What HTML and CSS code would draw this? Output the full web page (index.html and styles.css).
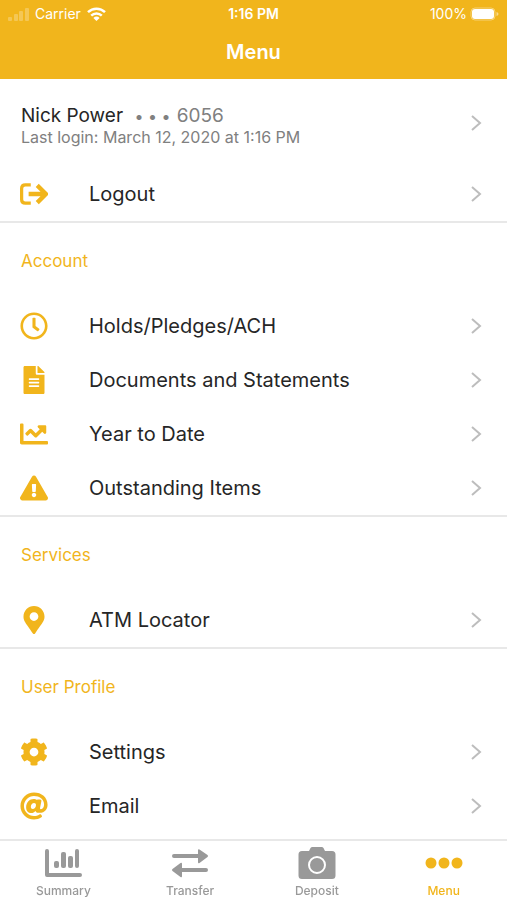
FILE: index.html
```html
<!DOCTYPE html>
<html lang="en">
<head>
  <meta charset="UTF-8">
  <meta name="viewport" content="width=device-width, initial-scale=1.0">
  <link rel="stylesheet" href="styles.css">
  <title>Menu</title>
</head>
<body>
  <svg class="defs" aria-hidden="true">
    <symbol id="chevron" viewBox="0 0 12 18">
      <path d="M2 2l8 7-8 7" fill="none" stroke="#bdbdbd" stroke-width="2"/>
    </symbol>
  </svg>

  <header class="header">
    <div class="status">
      <div class="carrier">
        <svg width="21" height="14" viewBox="0 0 21 14" fill="#fff" opacity=".25">
          <rect x="0" y="10" width="4" height="4" rx="1"/>
          <rect x="6" y="7" width="4" height="7" rx="1"/>
          <rect x="11" y="4" width="4" height="10" rx="1"/>
          <rect x="17" y="1" width="4" height="13" rx="1"/>
        </svg>
        <span>Carrier</span>
        <svg width="19" height="14" viewBox="0 0 19 14" fill="none" stroke="#fff" stroke-width="2.500">
          <path d="M1 5.200a12.200 12.200 0 0 1 17 0"/>
          <path d="M4.200 8.700a7.600 7.600 0 0 1 10.600 0"/>
          <path d="M9.500 14L6.400 10.900a4.400 4.400 0 0 1 6.200 0z" fill="#fff" stroke="none"/>
        </svg>
      </div>
      <div class="time">1:16 PM</div>
      <div class="battery">
        <span>100%</span>
        <svg width="29" height="14" viewBox="0 0 29 14">
          <rect x="1" y="1" width="24" height="12" rx="4" fill="none" stroke="#fff" opacity=".4"/>
          <rect x="2" y="2" width="22" height="10" rx="3" fill="#fff"/>
          <path d="M26.500 5v4q2-.5 2-2t-2-2z" fill="#fff" opacity=".5"/>
        </svg>
      </div>
    </div>
    <h1>Menu</h1>
  </header>

  <main class="content">
    <section>
      <a class="profile" href="#profile">
        <div class="profile-text">
          <div class="name">Nick Power <span class="dots">• • •</span> <span class="member">6056</span></div>
          <div class="login">Last login: March 12, 2020 at 1:16 PM</div>
        </div>
        <svg class="chevron"><use href="#chevron"/></svg>
      </a>
      <a class="row" href="#logout">
        <svg class="icon" viewBox="0 0 26 26" fill="none" stroke="currentColor" stroke-width="3">
          <path d="M10 4.500H5Q1.500 4.500 1.500 8v10q0 3.500 3.500 3.500h5"/>
          <path d="M8 13h15M16 5L24 13l-8 8" stroke-width="4"/>
        </svg>
        <span class="label">Logout</span>
        <svg class="chevron"><use href="#chevron"/></svg>
      </a>
    </section>

    <section>
      <h2>Account</h2>
      <a class="row" href="#holds">
        <svg class="icon" viewBox="0 0 512 512" fill="currentColor"><path d="M256 8C119 8 8 119 8 256s111 248 248 248 248-111 248-248S393 8 256 8zm0 448c-110.500 0-200-89.500-200-200S145.500 56 256 56s200 89.500 200 200-89.500 200-200 200zm61.800-104.400l-84.900-61.700c-3.100-2.300-4.900-5.900-4.900-9.700V116c0-6.600 5.400-12 12-12h32c6.600 0 12 5.400 12 12v141.700l66.800 48.600c5.400 3.900 6.500 11.400 2.600 16.800L334.600 349c-3.900 5.300-11.400 6.500-16.800 2.600z"/></svg>
        <span class="label">Holds/Pledges/ACH</span>
        <svg class="chevron"><use href="#chevron"/></svg>
      </a>
      <a class="row" href="#documents">
        <svg class="icon" viewBox="0 0 384 512" fill="currentColor"><path d="M224 136V0H24C10.700 0 0 10.700 0 24v464c0 13.300 10.700 24 24 24h336c13.300 0 24-10.700 24-24V160H248c-13.200 0-24-10.800-24-24zm64 236c0 6.600-5.400 12-12 12H108c-6.600 0-12-5.400-12-12v-8c0-6.600 5.400-12 12-12h168c6.600 0 12 5.400 12 12v8zm0-64c0 6.600-5.400 12-12 12H108c-6.600 0-12-5.400-12-12v-8c0-6.600 5.400-12 12-12h168c6.600 0 12 5.400 12 12v8zm0-72v8c0 6.600-5.400 12-12 12H108c-6.600 0-12-5.400-12-12v-8c0-6.600 5.400-12 12-12h168c6.600 0 12 5.400 12 12zm96-114.100v6.100H256V0h6.100c6.400 0 12.500 2.500 17 7l97.900 98c4.500 4.500 7 10.600 7 16.900z"/></svg>
        <span class="label">Documents and Statements</span>
        <svg class="chevron"><use href="#chevron"/></svg>
      </a>
      <a class="row" href="#year">
        <svg class="icon" viewBox="0 0 512 512" fill="currentColor"><path d="M496 384H64V80c0-8.840-7.160-16-16-16H16C7.160 64 0 71.160 0 80v336c0 17.670 14.330 32 32 32h464c8.840 0 16-7.160 16-16v-32c0-8.840-7.160-16-16-16zM464 96H345.940c-21.380 0-32.090 25.850-16.970 40.970l32.400 32.400L288 242.750l-73.370-73.370c-12.500-12.500-32.760-12.500-45.250 0l-68.690 68.690c-6.250 6.250-6.250 16.380 0 22.630l22.620 22.620c6.250 6.250 16.380 6.250 22.630 0L192 237.250l73.370 73.370c12.500 12.500 32.760 12.500 45.250 0l96-96 32.400 32.400c15.120 15.120 40.970 4.410 40.970-16.970V112c.010-8.840-7.150-16-15.990-16z"/></svg>
        <span class="label">Year to Date</span>
        <svg class="chevron"><use href="#chevron"/></svg>
      </a>
      <a class="row" href="#outstanding">
        <svg class="icon" viewBox="0 0 576 512" fill="currentColor"><path d="M569.517 440.013C587.975 472.007 564.806 512 527.940 512H48.054c-36.937 0-59.999-40.055-41.577-71.987L246.423 23.985c18.467-32.009 64.720-31.951 83.154 0l239.940 416.028zM288 354c-25.405 0-46 20.595-46 46s20.595 46 46 46 46-20.595 46-46-20.595-46-46-46zm-43.673-165.346l7.418 136c.347 6.364 5.609 11.346 11.982 11.346h48.546c6.373 0 11.635-4.982 11.982-11.346l7.418-136c.375-6.874-5.098-12.654-11.982-12.654h-63.383c-6.884 0-12.356 5.780-11.981 12.654z"/></svg>
        <span class="label">Outstanding Items</span>
        <svg class="chevron"><use href="#chevron"/></svg>
      </a>
    </section>

    <section>
      <h2>Services</h2>
      <a class="row" href="#atm">
        <svg class="icon" viewBox="0 0 384 512" fill="currentColor"><path d="M172.268 501.670C26.970 291.031 0 269.413 0 192 0 85.961 85.961 0 192 0s192 85.961 192 192c0 77.413-26.970 99.031-172.268 309.670-9.535 13.774-29.930 13.773-39.464 0zM192 272c44.183 0 80-35.817 80-80s-35.817-80-80-80-80 35.817-80 80 35.817 80 80 80z"/></svg>
        <span class="label">ATM Locator</span>
        <svg class="chevron"><use href="#chevron"/></svg>
      </a>
    </section>

    <section>
      <h2>User Profile</h2>
      <a class="row" href="#settings">
        <svg class="icon" viewBox="0 0 512 512" fill="currentColor"><path d="M487.400 315.700l-42.600-24.600c4.300-23.200 4.300-47 0-70.200l42.600-24.600c4.900-2.800 7.100-8.600 5.500-14-11.100-35.600-30-67.800-54.700-94.600-3.800-4.100-10-5.100-14.800-2.300L380.800 110c-17.900-15.400-38.500-27.300-60.800-35.100V25.800c0-5.600-3.900-10.500-9.400-11.700-36.700-8.200-74.300-7.800-109.200 0-5.500 1.200-9.400 6.100-9.400 11.700V75c-22.200 7.900-42.800 19.800-60.800 35.100L88.700 85.500c-4.900-2.800-11-1.900-14.800 2.300-24.700 26.700-43.600 58.900-54.700 94.600-1.700 5.400.6 11.200 5.500 14L67.300 221c-4.300 23.200-4.300 47 0 70.200l-42.600 24.600c-4.900 2.800-7.100 8.600-5.500 14 11.100 35.600 30 67.800 54.700 94.600 3.800 4.100 10 5.100 14.800 2.300l42.600-24.600c17.900 15.400 38.500 27.300 60.800 35.100v49.200c0 5.600 3.900 10.500 9.400 11.700 36.700 8.200 74.300 7.800 109.200 0 5.500-1.200 9.400-6.100 9.400-11.700v-49.200c22.200-7.900 42.800-19.800 60.800-35.100l42.600 24.600c4.900 2.800 11 1.900 14.800-2.300 24.700-26.700 43.600-58.900 54.700-94.600 1.500-5.500-.7-11.300-5.600-14.100zM256 336c-44.100 0-80-35.900-80-80s35.900-80 80-80 80 35.900 80 80-35.900 80-80 80z"/></svg>
        <span class="label">Settings</span>
        <svg class="chevron"><use href="#chevron"/></svg>
      </a>
      <a class="row" href="#email">
        <svg class="icon" viewBox="0 0 512 512" fill="currentColor"><path d="M256 8C118.941 8 8 118.919 8 256c0 137.059 110.919 248 248 248 48.154 0 95.342-14.140 135.408-40.223 12.005-7.815 14.625-24.288 5.552-35.372l-10.177-12.433c-7.671-9.371-21.179-11.667-31.373-5.129C325.920 429.757 291.314 440 256 440c-101.458 0-184-82.542-184-184S154.542 72 256 72c100.139 0 184 57.619 184 160 0 38.786-21.093 79.742-58.170 83.693-17.349-.454-16.910-12.857-13.476-30.024l23.433-121.110C394.653 149.750 383.308 136 368.225 136h-44.981a13.518 13.518 0 0 0-13.432 11.993l-.010.092c-14.697-17.901-40.448-21.775-59.971-21.775-74.580 0-137.831 62.234-137.831 151.460 0 65.303 36.785 105.870 96 105.870 26.984 0 57.369-15.637 74.991-38.333 9.522 34.104 40.613 34.103 70.710 34.103C462.609 379.410 504 307.798 504 232 504 95.653 394.023 8 256 8zm-21.680 304.430c-22.249 0-36.070-15.623-36.070-40.771 0-44.993 30.779-72.729 58.630-72.729 22.292 0 35.601 15.241 35.601 40.770 0 45.061-33.875 72.730-58.161 72.730z"/></svg>
        <span class="label">Email</span>
        <svg class="chevron"><use href="#chevron"/></svg>
      </a>
    </section>
  </main>

  <nav class="tabs">
    <a href="#summary">
      <svg width="38" height="32" viewBox="0 0 38 32" fill="currentColor">
        <path d="M3 4v24h33" fill="none" stroke="currentColor" stroke-width="4" stroke-linecap="round" stroke-linejoin="round"/>
        <rect x="10" y="14" width="5" height="7" rx="2"/>
        <rect x="17" y="5" width="5" height="16" rx="2"/>
        <rect x="24" y="9" width="5" height="12" rx="2"/>
        <rect x="31" y="2" width="4" height="19" rx="2"/>
      </svg>
      <span>Summary</span>
    </a>
    <a href="#transfer">
      <svg width="38" height="32" viewBox="0 0 38 32" fill="currentColor">
        <path d="M3 9h26M10 23h25" stroke="currentColor" stroke-width="4" stroke-linecap="round"/>
        <path d="M28.500 2.500L36.500 8q1.200 1 0 2l-8 6q-1.500 1-1.500-1V3.500q0-2 1.500-1zM9.500 16L1.500 22q-1.200 1 0 2l8 6q1.500 1 1.500-1V17q0-2-1.500-1z"/>
      </svg>
      <span>Transfer</span>
    </a>
    <a href="#deposit">
      <svg width="38" height="32" viewBox="0 0 38 32" fill="currentColor">
        <path d="M4 4h7l1.500-3Q13 0 14.500 0h9q1.500 0 2 1L27 4h7q3.500 0 3.500 3.500v21q0 3.500-3.500 3.500H4Q.5 32 .5 28.500v-21Q.5 4 4 4z"/>
        <circle cx="19" cy="18" r="8" fill="none" stroke="#fff" stroke-width="2"/>
      </svg>
      <span>Deposit</span>
    </a>
    <a class="active" href="#menu">
      <svg width="38" height="32" viewBox="0 0 38 32" fill="currentColor">
        <circle cx="6" cy="16" r="5.500"/>
        <circle cx="19" cy="16" r="5.500"/>
        <circle cx="32" cy="16" r="5.500"/>
      </svg>
      <span>Menu</span>
    </a>
  </nav>
</body>
</html>
```
FILE: styles.css
```css
* {
  box-sizing: border-box;
}
body {
  margin: 0;
  min-height: 100vh;
  display: flex;
  flex-direction: column;
  font-family: Inter, "Liberation Sans", sans-serif;
  color: #262626;
  background-color: #fff;
}
a {
  color: inherit;
  text-decoration: none;
}
svg {
  display: block;
  flex-shrink: 0;
}
.defs {
  width: 0;
  height: 0;
  position: absolute;
}

.header {
  height: 79px;
  color: #fff;
  background-color: #f1b51c;
}
.status {
  display: grid;
  grid-template-columns: 1fr auto 1fr;
  align-items: center;
  height: 27px;
  padding: 0 8px;
  font-size: 14px;
}
.carrier,
.battery {
  display: flex;
  align-items: center;
  gap: 6px;
}
.battery {
  justify-content: flex-end;
  gap: 3px;
}
.time {
  font-size: 14px;
  font-weight: 600;
}
.header h1 {
  margin: 0;
  font-size: 20px;
  font-weight: 600;
  line-height: 50px;
  text-align: center;
}

.content {
  flex: 1;
}
section {
  border-bottom: 2px solid #e8e8e8;
}
section:last-child {
  border-bottom: none;
}
.profile {
  display: flex;
  align-items: center;
  height: 88px;
  padding: 0 25px 0 21px;
}
.profile-text {
  flex: 1;
  padding-top: 4px;
}
.name {
  font-size: 19px;
  line-height: 23px;
}
.dots {
  margin: 0 1px 0 6px;
  font-size: 16px;
  color: #808080;
}
.member {
  color: #808080;
}
.login {
  font-size: 16px;
  line-height: 19px;
  color: #808080;
}
.row {
  display: flex;
  align-items: center;
  height: 54px;
  padding: 0 25px 0 20px;
}
.icon {
  width: 28px;
  height: 28px;
  margin-right: 41px;
  color: #f1b51c;
}
.label {
  flex: 1;
  font-size: 20px;
}
.chevron {
  width: 12px;
  height: 18px;
}
h2 {
  margin: 0;
  padding-left: 21px;
  font-size: 17px;
  font-weight: 400;
  line-height: 76px;
  color: #f1b51c;
}

.tabs {
  position: sticky;
  bottom: 0;
  display: flex;
  height: 61px;
  border-top: 2px solid #e8e8e8;
  background-color: #fff;
}
.tabs a {
  flex: 1;
  display: flex;
  flex-direction: column;
  align-items: center;
  padding-top: 6px;
  font-size: 12px;
  font-weight: 500;
  line-height: 24px;
  color: #999;
}
.tabs .active {
  color: #f1b51c;
}
```
